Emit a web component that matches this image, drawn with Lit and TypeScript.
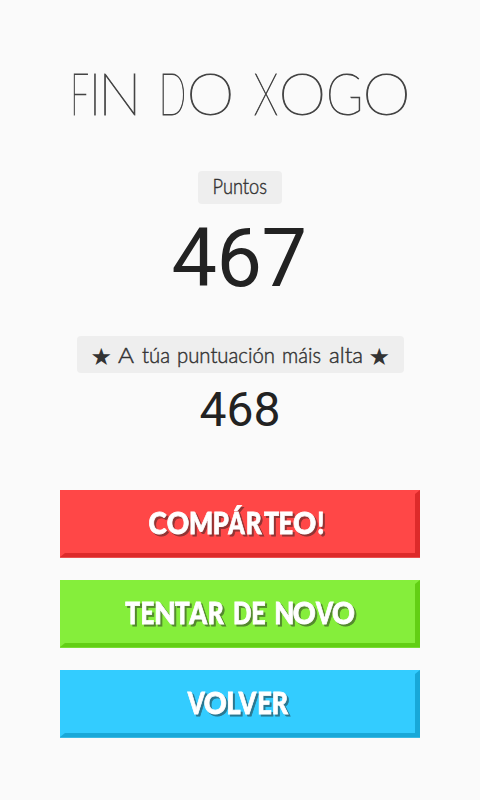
import { LitElement, html, css, svg } from "lit";
import { customElement, property } from "lit/decorators.js";

type Run = { text: string; x: number; length: number };
/** A word with the left and right ink edge of each letter. */
type Word = { text: string; edges: number[] };

const pen = document.createElement("canvas").getContext("2d")!;

/** Fits every letter of a word between its own pair of edges. */
const fitted = (word: Word, font: string, origin: number, y: number) => {
  pen.font = font;
  return svg`<text y=${y}>${[...word.text].map((ch, i) => {
    const left = word.edges[i * 2] - origin;
    const right = word.edges[i * 2 + 1] - origin;
    const m = pen.measureText(ch);
    const ink = m.actualBoundingBoxLeft + m.actualBoundingBoxRight;
    const scale = Math.min((right - left) / ink, 1.35);
    const x = (left + right) / 2 - ((m.actualBoundingBoxRight - m.actualBoundingBoxLeft) / 2) * scale;
    return svg`<tspan x=${x.toFixed(2)} textLength=${(m.width * scale).toFixed(2)} lengthAdjust="spacingAndGlyphs">${ch}</tspan>`;
  })}</text>`;
};

const board = (width: number, height: number, content: unknown) => html`
  <svg class="lettering" width=${width} height=${height} viewBox="0 0 ${width} ${height}">${content}</svg>
`;

const runs = (list: Run[], y: number) =>
  list.map((r) => svg`<text x=${r.x} y=${y} textLength=${r.length} lengthAdjust="spacingAndGlyphs">${r.text}</text>`);

@customElement("game-button")
class GameButton extends LitElement {
  @property({ attribute: false }) words: Word[] = [];

  static styles = css`
    :host { display: block; height: 68px; }
    button {
      display: block;
      box-sizing: border-box;
      width: 100%;
      height: 67px;
      padding: 0;
      border: 0 solid;
      border-width: 4px 5px 4px 5px;
      border-color: var(--face) var(--edge) var(--edge) var(--face);
      background: var(--face);
      box-shadow: 0 1px 0 var(--rim);
    }
    .lettering {
      display: block;
      margin-left: -5px;
      margin-top: -4px;
      overflow: visible;
      fill: #fff;
      stroke: #fff;
      stroke-width: 0.8px;
      font: 900 30px Lato, "Liberation Sans", sans-serif;
      filter: drop-shadow(2px 2px 0 rgba(34, 34, 34, 0.5));
    }
  `;

  render() {
    return html`<button>
      ${board(360, 67, this.words.map((w) => fitted(w, "900 30px Lato", 60, 44)))}
    </button>`;
  }
}

const TITLE: Word[] = [
  { text: "FIN", edges: [73.6, 88, 94, 95.7, 104.2, 135.6] },
  { text: "DO", edges: [162.6, 184, 189.6, 231] },
  { text: "XOGO", edges: [254.5, 277, 281.6, 322.8, 328.6, 360.3, 365.8, 407.4] },
];
const SHARE: Word[] = [
  {
    text: "COMPÁRTEO!",
    edges: [149.5, 167, 167.7, 189, 190.8, 212, 214.5, 229, 227.5, 245.5, 247.3, 262, 264, 279, 280.3, 293, 294, 316, 318, 323],
  },
];
const RETRY: Word[] = [
  { text: "TENTAR", edges: [125.3, 140, 142, 154, 156, 174, 175, 189.5, 188.5, 208, 209.3, 224] },
  { text: "DE", edges: [234.7, 251, 253, 265.5] },
  { text: "NOVO", edges: [276, 292.5, 293.7, 315.5, 315.3, 334, 333, 354.7] },
];
const BACK: Word[] = [
  { text: "VOLVER", edges: [187, 205.5, 204.7, 226.5, 228.2, 241, 238, 257, 259, 271.7, 273.5, 288.5] },
];

@customElement("app-root")
class AppRoot extends LitElement {
  static styles = css`
    :host {
      display: flex;
      flex-direction: column;
      align-items: center;
      height: 800px;
      background: #fafafa;
      overflow: hidden;
      color: #222;
    }
    .lettering { display: block; overflow: visible; }
    .title { margin: 60px 0 0; height: 70px; opacity: 0.999; }
    .title .lettering {
      fill: #444;
      stroke: #444;
      stroke-width: 0.95px;
      font: 100 57.5px Lato, "Liberation Sans", sans-serif;
    }
    .label { border-radius: 4px; background: #eee; }
    .label .lettering {
      fill: #333;
      stroke: #333;
      stroke-width: 0.45px;
      font: 300 22px Lato, "Liberation Sans", sans-serif;
    }
    .points { margin-top: 40.5px; }
    .best { margin-top: 32px; display: flex; height: 37.5px; }
    .star { width: 41px; font: 24px/43px "DejaVu Sans", sans-serif; color: #333; box-sizing: border-box; padding-left: 14px; }
    .star.end { padding-left: 6px; }
    .score { font-family: Roboto, "Noto Sans", sans-serif; text-align: center; }
    .big { font-size: 81px; line-height: 109px; height: 100px; letter-spacing: -0.5px; margin-left: -2px; }
    .small { font-size: 48px; line-height: 73px; height: 72px; }
    .actions { width: 360px; margin-top: 45px; display: flex; flex-direction: column; gap: 22px; }
    .share { --face: #ff4747; --edge: #dd2a2a; --rim: #e95050; }
    .retry { --face: #85ee3b; --edge: #62cf14; --rim: #78dc35; }
    .back { --face: #33ccff; --edge: #18a8d8; --rim: #3bb8e2; }
  `;

  render() {
    return html`
      <h1 class="title">${board(360, 70, TITLE.map((w) => fitted(w, "100 57.5px Lato", 60, 54.7)))}</h1>
      <div class="label points">${board(84, 33, runs([{ text: "Puntos", x: 14.5, length: 54.5 }], 23))}</div>
      <div class="score big">467</div>
      <div class="label best">
        <span class="star">★</span>
        ${board(245, 37, runs([
          { text: "A", x: 0, length: 16 },
          { text: "túa", x: 24, length: 28 },
          { text: "puntuación", x: 59, length: 98 },
          { text: "máis", x: 164, length: 39 },
          { text: "alta", x: 211, length: 34 },
        ], 27))}
        <span class="star end">★</span>
      </div>
      <div class="score small">468</div>
      <div class="actions">
        <game-button class="share" .words=${SHARE}></game-button>
        <game-button class="retry" .words=${RETRY}></game-button>
        <game-button class="back" .words=${BACK}></game-button>
      </div>
    `;
  }
}
